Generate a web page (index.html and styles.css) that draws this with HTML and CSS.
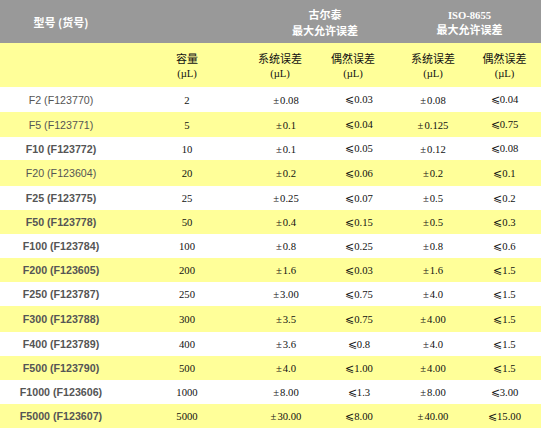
FILE: index.html
```html
<!DOCTYPE html>
<html lang="zh">
<head>
<meta charset="utf-8">
<link rel="stylesheet" href="styles.css">
</head>
<body>
<table class="spec">
  <colgroup>
    <col class="c1"><col class="c2"><col class="c3"><col class="c4"><col class="c5"><col class="c6">
  </colgroup>
  <thead>
    <tr class="head-top">
      <th class="cn">型号 (货号)</th>
      <th></th>
      <th colspan="2" class="cn two">古尔泰<br>最大允许误差</th>
      <th colspan="2" class="cn"><span class="latin">ISO-8655</span><br>最大允许误差</th>
    </tr>
    <tr class="head-sub">
      <th></th>
      <th class="sub">容量<br><span class="unit">(µL)</span></th>
      <th class="sub shift">系统误差<br><span class="unit">(µL)</span></th>
      <th class="sub shift">偶然误差<br><span class="unit">(µL)</span></th>
      <th class="sub">系统误差<br><span class="unit">(µL)</span></th>
      <th class="sub">偶然误差<br><span class="unit">(µL)</span></th>
    </tr>
  </thead>
  <tbody>
    <tr class="h25"><td class="model">F2 (F123770)</td><td>2</td><td>±0.08</td><td>⩽0.03</td><td>±0.08</td><td>⩽0.04</td></tr>
    <tr class="alt h25"><td class="model">F5 (F123771)</td><td>5</td><td>±0.1</td><td>⩽0.04</td><td>±0.125</td><td>⩽0.75</td></tr>
    <tr class="h23"><td class="model b">F10 (F123772)</td><td>10</td><td>±0.1</td><td>⩽0.05</td><td>±0.12</td><td>⩽0.08</td></tr>
    <tr class="alt h26"><td class="model">F20 (F123604)</td><td>20</td><td>±0.2</td><td>⩽0.06</td><td>±0.2</td><td>⩽0.1</td></tr>
    <tr><td class="model b">F25 (F123775)</td><td>25</td><td>±0.25</td><td>⩽0.07</td><td>±0.5</td><td>⩽0.2</td></tr>
    <tr class="alt"><td class="model b">F50 (F123778)</td><td>50</td><td>±0.4</td><td>⩽0.15</td><td>±0.5</td><td>⩽0.3</td></tr>
    <tr><td class="model b">F100 (F123784)</td><td>100</td><td>±0.8</td><td>⩽0.25</td><td>±0.8</td><td>⩽0.6</td></tr>
    <tr class="alt"><td class="model b">F200 (F123605)</td><td>200</td><td>±1.6</td><td>⩽0.03</td><td>±1.6</td><td>⩽1.5</td></tr>
    <tr><td class="model b">F250 (F123787)</td><td>250</td><td>±3.00</td><td>⩽0.75</td><td>±4.0</td><td>⩽1.5</td></tr>
    <tr class="alt h26"><td class="model b">F300 (F123788)</td><td>300</td><td>±3.5</td><td>⩽0.75</td><td>±4.00</td><td>⩽1.5</td></tr>
    <tr><td class="model b">F400 (F123789)</td><td>400</td><td>±3.6</td><td>⩽0.8</td><td>±4.0</td><td>⩽1.5</td></tr>
    <tr class="alt"><td class="model b">F500 (F123790)</td><td>500</td><td>±4.0</td><td>⩽1.00</td><td>±4.00</td><td>⩽1.5</td></tr>
    <tr><td class="model b">F1000 (F123606)</td><td>1000</td><td>±8.00</td><td>⩽1.3</td><td>±8.00</td><td>⩽3.00</td></tr>
    <tr class="alt"><td class="model b">F5000 (F123607)</td><td>5000</td><td>±30.00</td><td>⩽8.00</td><td>±40.00</td><td>⩽15.00</td></tr>
  </tbody>
</table>
</body>
</html>
```

FILE: styles.css
```css
html, body {
  margin: 0;
  padding: 0;
  background: #ffffff;
}

.spec {
  width: 541px;
  border-collapse: collapse;
  table-layout: fixed;
  font-family: "Liberation Serif", "Noto Sans CJK SC", serif;
  font-size: 10.67px;
  color: #111111;
}

.c1 { width: 122px; }
.c2 { width: 130px; }
.c3 { width: 68px; }
.c4 { width: 78px; }
.c5 { width: 70px; }
.c6 { width: 73px; }

.spec th,
.spec td {
  padding: 0;
  text-align: center;
  vertical-align: middle;
  font-weight: normal;
}

.head-top {
  height: 43px;
  background: #999999;
}

.head-top th {
  color: #ffffff;
  font-weight: bold;
  line-height: 14px;
}

.head-top th.two {
  line-height: 16px;
}

.cn {
  font-family: "Noto Sans CJK SC", sans-serif;
  font-size: 11px;
}

.latin {
  font-family: "Liberation Serif", serif;
  font-size: 10.67px;
}

.head-sub {
  height: 44px;
  background: #ffff99;
}

.sub {
  font-family: "Noto Sans CJK SC", sans-serif;
  font-size: 11px;
  line-height: 14px;
  color: #111111;
}

.shift {
  padding-right: 12px !important;
}

.unit {
  font-family: "Liberation Serif", serif;
  font-size: 10.67px;
}

.spec tbody tr {
  height: 24px;
}

.spec tbody tr.h23 { height: 23px; }
.spec tbody tr.h25 { height: 25px; }
.spec tbody tr.h26 { height: 26px; }

.spec tbody tr.alt {
  background: #ffff99;
}

.spec tbody td:nth-child(3)::first-letter,
.spec tbody td:nth-child(5)::first-letter {
  margin-right: 1px;
}

.model {
  font-family: "Liberation Sans", Arial, sans-serif;
  font-size: 10.67px;
  color: #555555;
}

.model.b {
  font-weight: bold;
}
```
